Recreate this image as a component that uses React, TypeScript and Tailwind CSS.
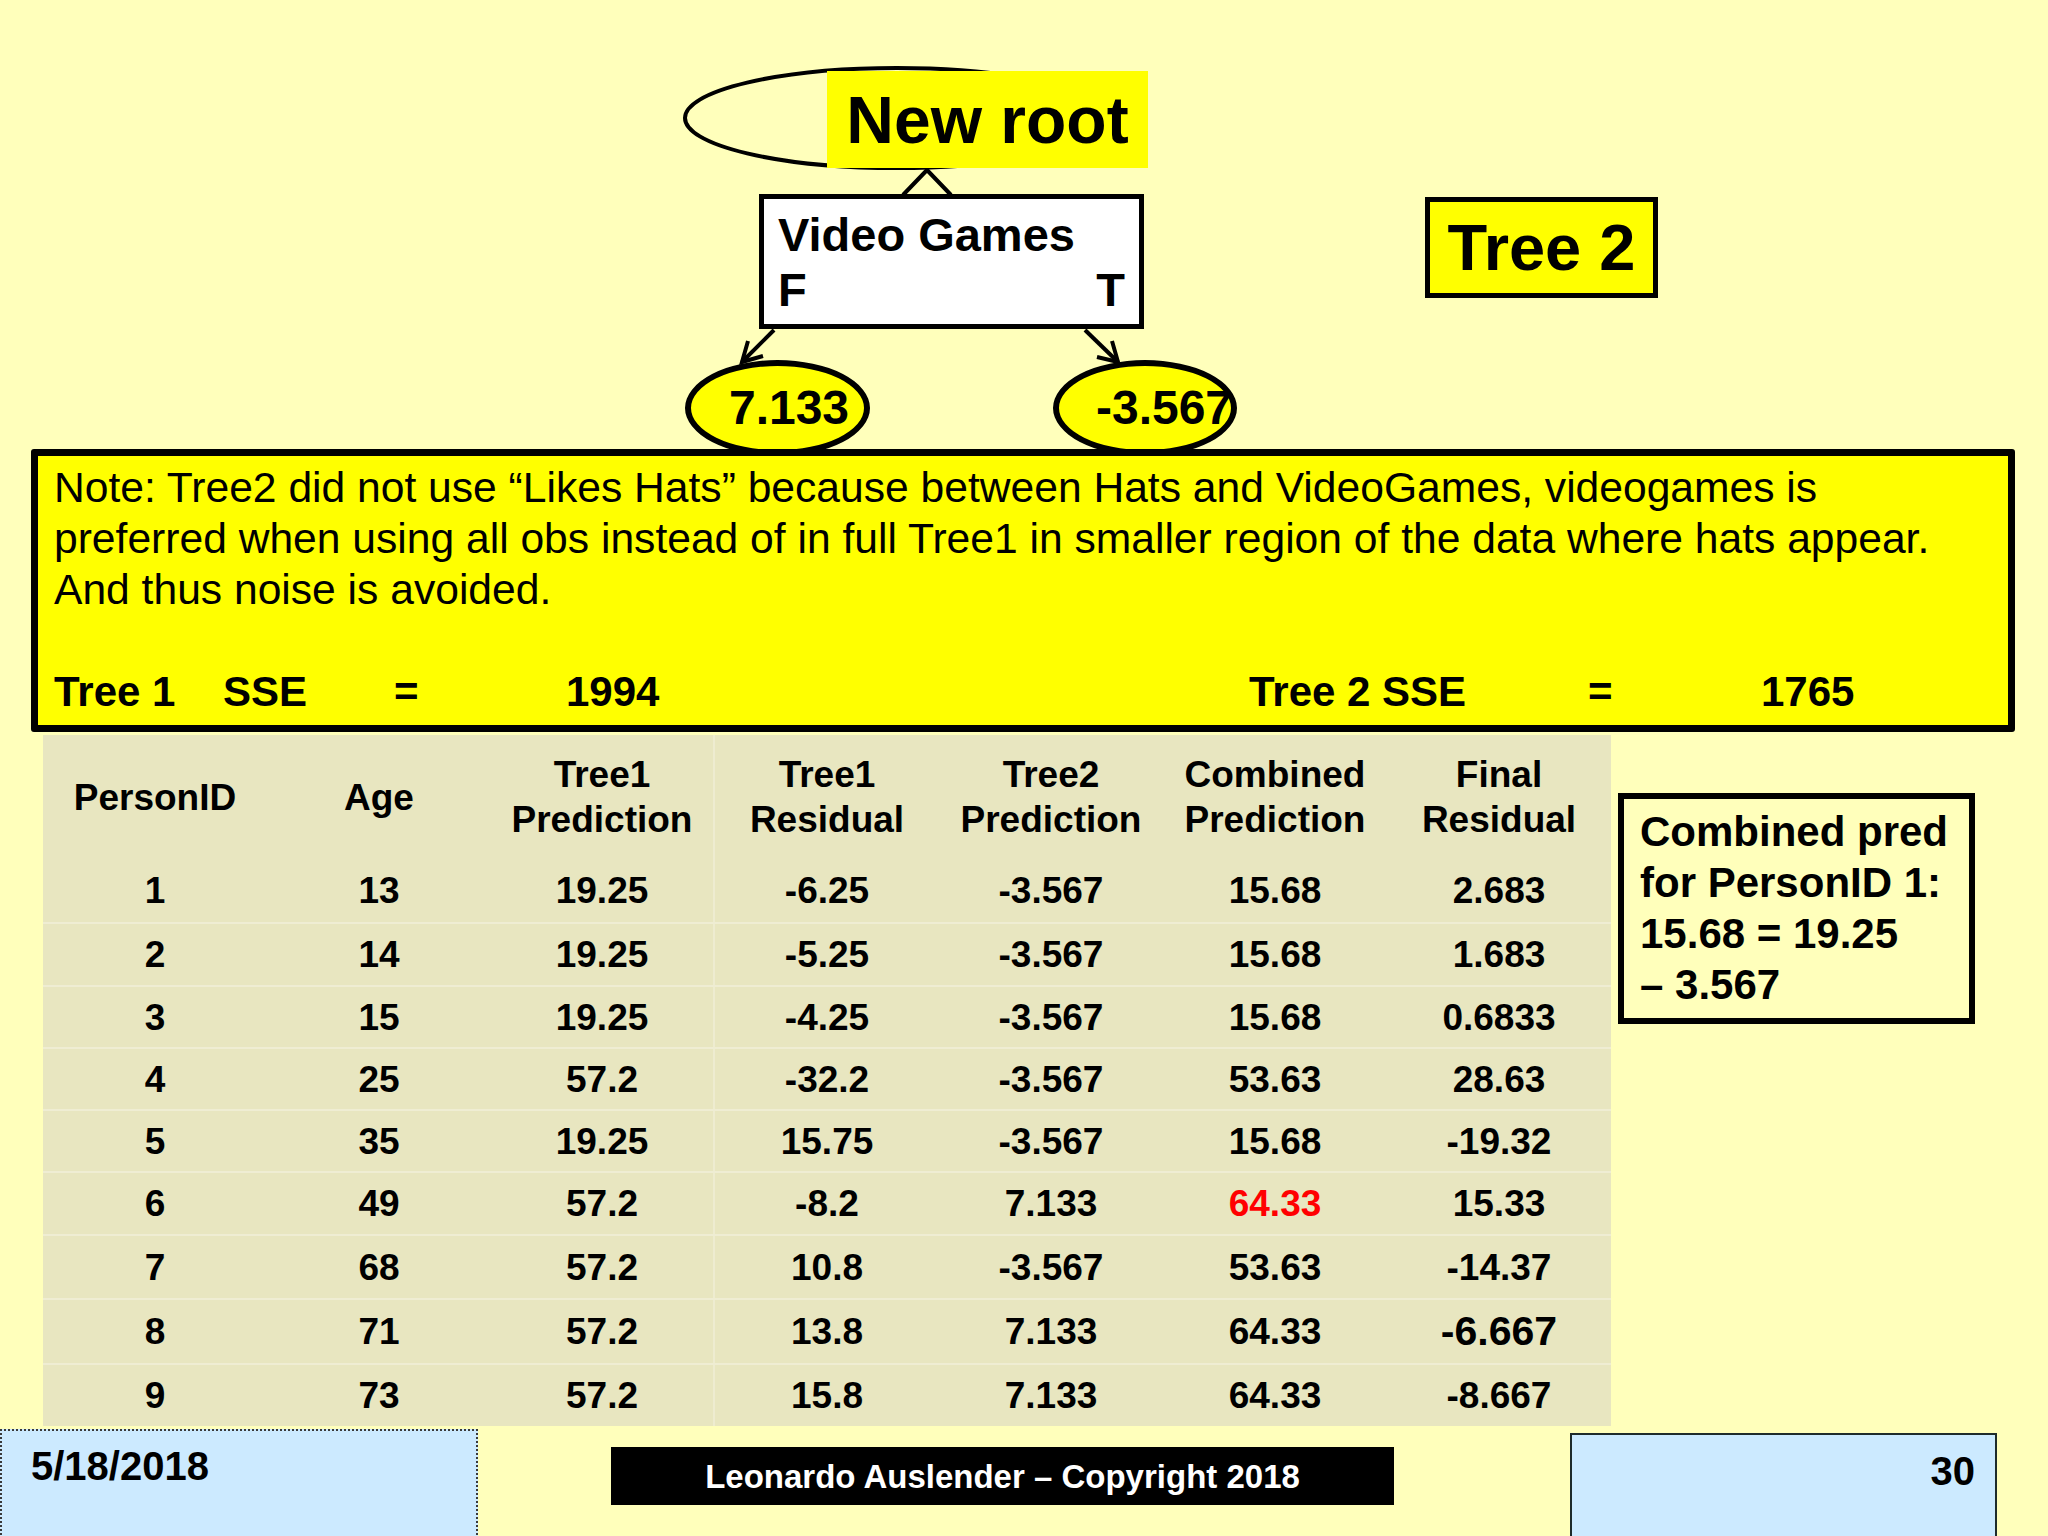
import React from 'react'

type Row = {
    id: string
    age: string
    t1Pred: string
    t1Resid: string
    t2Pred: string
    combined: string
    final: string
    height: string
    combinedRed?: boolean
    finalBig?: boolean
}

const ROWS: Row[] = [
    { id: '1', age: '13', t1Pred: '19.25', t1Resid: '-6.25', t2Pred: '-3.567', combined: '15.68', final: '2.683', height: 'h-[63px]' },
    { id: '2', age: '14', t1Pred: '19.25', t1Resid: '-5.25', t2Pred: '-3.567', combined: '15.68', final: '1.683', height: 'h-[63px]' },
    { id: '3', age: '15', t1Pred: '19.25', t1Resid: '-4.25', t2Pred: '-3.567', combined: '15.68', final: '0.6833', height: 'h-[62px]' },
    { id: '4', age: '25', t1Pred: '57.2', t1Resid: '-32.2', t2Pred: '-3.567', combined: '53.63', final: '28.63', height: 'h-[62px]' },
    { id: '5', age: '35', t1Pred: '19.25', t1Resid: '15.75', t2Pred: '-3.567', combined: '15.68', final: '-19.32', height: 'h-[62px]' },
    { id: '6', age: '49', t1Pred: '57.2', t1Resid: '-8.2', t2Pred: '7.133', combined: '64.33', final: '15.33', height: 'h-[63px]', combinedRed: true },
    { id: '7', age: '68', t1Pred: '57.2', t1Resid: '10.8', t2Pred: '-3.567', combined: '53.63', final: '-14.37', height: 'h-[64px]' },
    { id: '8', age: '71', t1Pred: '57.2', t1Resid: '13.8', t2Pred: '7.133', combined: '64.33', final: '-6.667', height: 'h-[65px]', finalBig: true },
    { id: '9', age: '73', t1Pred: '57.2', t1Resid: '15.8', t2Pred: '7.133', combined: '64.33', final: '-8.667', height: 'h-[63px]' },
]

function Cell({ children, divider = false, className = '' }: { children: React.ReactNode; divider?: boolean; className?: string }) {
    return (
        <div
            className={`flex w-[224px] items-center justify-center text-center ${divider ? 'border-r-2 border-[#eeecd0]' : ''} ${className}`}
        >
            {children}
        </div>
    )
}

function TreeDiagram() {
    return (
        <div className="relative h-[449px]">
            <svg className="absolute left-0 top-0" width={2048} height={449} viewBox="0 0 2048 449">
                <ellipse cx={897} cy={118} rx={212} ry={50} fill="none" stroke="#000" strokeWidth={4} />
                <polyline points="903,195 927,170 951,195" fill="none" stroke="#000" strokeWidth={4} />
                <line x1={774} y1={330} x2={742} y2={362} stroke="#000" strokeWidth={4} />
                <polyline points="763,356 742,362 748,341" fill="none" stroke="#000" strokeWidth={4} />
                <line x1={1085} y1={330} x2={1118} y2={362} stroke="#000" strokeWidth={4} />
                <polyline points="1112,341 1118,362 1097,357" fill="none" stroke="#000" strokeWidth={4} />
            </svg>

            <div className="absolute left-[827px] top-[71px] flex h-[97px] w-[321px] items-center justify-center bg-[#ffff00]">
                <span className="text-[66px] font-bold leading-none text-black">New root</span>
            </div>

            <div className="absolute left-[759px] top-[194px] h-[135px] w-[385px] border-[5px] border-black bg-white pl-[14px] pt-[8px]">
                <div className="text-[47px] font-bold leading-[55px] text-black">Video Games</div>
                <div className="flex justify-between pr-[14px] text-[47px] font-bold leading-[55px] text-black">
                    <span>F</span>
                    <span>T</span>
                </div>
            </div>

            <div className="absolute left-[1425px] top-[197px] flex h-[101px] w-[233px] items-center justify-center border-[5px] border-black bg-[#ffff00]">
                <span className="text-[65px] font-bold leading-none text-black">Tree 2</span>
            </div>

            <div className="absolute left-[685px] top-[360px] flex h-[96px] w-[185px] items-center justify-center rounded-[50%] border-[6px] border-black bg-[#ffff00] pl-[23px]">
                <span className="text-[48px] font-bold leading-none text-black">7.133</span>
            </div>

            <div className="absolute left-[1053px] top-[360px] flex h-[96px] w-[184px] items-center justify-center rounded-[50%] border-[6px] border-black bg-[#ffff00] pl-[38px]">
                <span className="text-[48px] font-bold leading-none text-black">-3.567</span>
            </div>
        </div>
    )
}

export default function App() {
    return (
        <div className="relative h-[1536px] w-[2048px] overflow-hidden bg-[#ffffbb] font-['Liberation_Sans',Arial,sans-serif] text-black">
            <TreeDiagram />

            {/* note box */}
            <div className="relative z-10 ml-[31px] h-[283px] w-[1984px] rounded-[3px] border-[7px] border-black bg-[#ffff00] pl-[16px] pt-[6px]">
                <p className="text-[42.6px] leading-[51px]">
                    Note: Tree2 did not use “Likes Hats” because between Hats and VideoGames, videogames is
                    <br />
                    preferred when using all obs instead of in full Tree1 in smaller region of the data where hats appear.
                    <br />
                    And thus noise is avoided.
                </p>
                <div className="mt-[51px] flex text-[42px] font-bold leading-[51px]">
                    <span className="w-[169px]">Tree 1</span>
                    <span className="w-[171px]">SSE</span>
                    <span className="w-[172px]">=</span>
                    <span className="w-[683px]">1994</span>
                    <span className="w-[339px]">Tree 2 SSE</span>
                    <span className="w-[173px]">=</span>
                    <span>1765</span>
                </div>
            </div>

            <div className="mt-[3px] flex items-start">
                {/* data table */}
                <div className="ml-[43px] w-[1568px] bg-[#e8e6c0] text-[37px] font-bold">
                    <div className="flex h-[124px] leading-[45px]">
                        <Cell>PersonID</Cell>
                        <Cell>Age</Cell>
                        <Cell divider>
                            Tree1
                            <br />
                            Prediction
                        </Cell>
                        <Cell>
                            Tree1
                            <br />
                            Residual
                        </Cell>
                        <Cell>
                            Tree2
                            <br />
                            Prediction
                        </Cell>
                        <Cell>
                            Combined
                            <br />
                            Prediction
                        </Cell>
                        <Cell>
                            Final
                            <br />
                            Residual
                        </Cell>
                    </div>
                    {ROWS.map((row, i) => (
                        <div
                            key={row.id}
                            className={`flex ${row.height} ${i > 0 ? 'border-t-2 border-[#efedd3]' : ''} leading-none`}
                        >
                            <Cell>{row.id}</Cell>
                            <Cell>{row.age}</Cell>
                            <Cell divider>{row.t1Pred}</Cell>
                            <Cell>{row.t1Resid}</Cell>
                            <Cell>{row.t2Pred}</Cell>
                            <Cell className={row.combinedRed ? 'text-[#ff0000]' : ''}>{row.combined}</Cell>
                            <Cell className={row.finalBig ? 'text-[41px]' : ''}>{row.final}</Cell>
                        </div>
                    ))}
                </div>

                <div className="ml-[7px] mt-[58px] h-[231px] w-[357px] border-[6px] border-black bg-[#ffffbb] pl-[16px] pt-[7px] text-[42px] font-bold leading-[51px]">
                    <div>Combined pred</div>
                    <div>for PersonID 1:</div>
                    <div>15.68 = 19.25</div>
                    <div>– 3.567</div>
                </div>
            </div>

            {/* footer */}
            <div className="mt-[3px] flex items-start">
                <div className="h-[110px] w-[478px] border-2 border-dotted border-[#3a3a3a] bg-[#cceaff] pl-[29px] pt-[12px]">
                    <span className="text-[40px] font-bold leading-[46px]">5/18/2018</span>
                </div>
                <div className="ml-[133px] mt-[18px] flex h-[58px] w-[783px] items-center justify-center bg-black">
                    <span className="text-[33px] font-bold leading-none text-white">Leonardo Auslender – Copyright 2018</span>
                </div>
                <div className="ml-[176px] mt-[4px] flex h-[110px] w-[427px] justify-end border-2 border-[#1e2b2b] bg-[#cceaff] pr-[20px] pt-[13px]">
                    <span className="text-[40px] font-bold leading-[46px]">30</span>
                </div>
            </div>
        </div>
    )
}
